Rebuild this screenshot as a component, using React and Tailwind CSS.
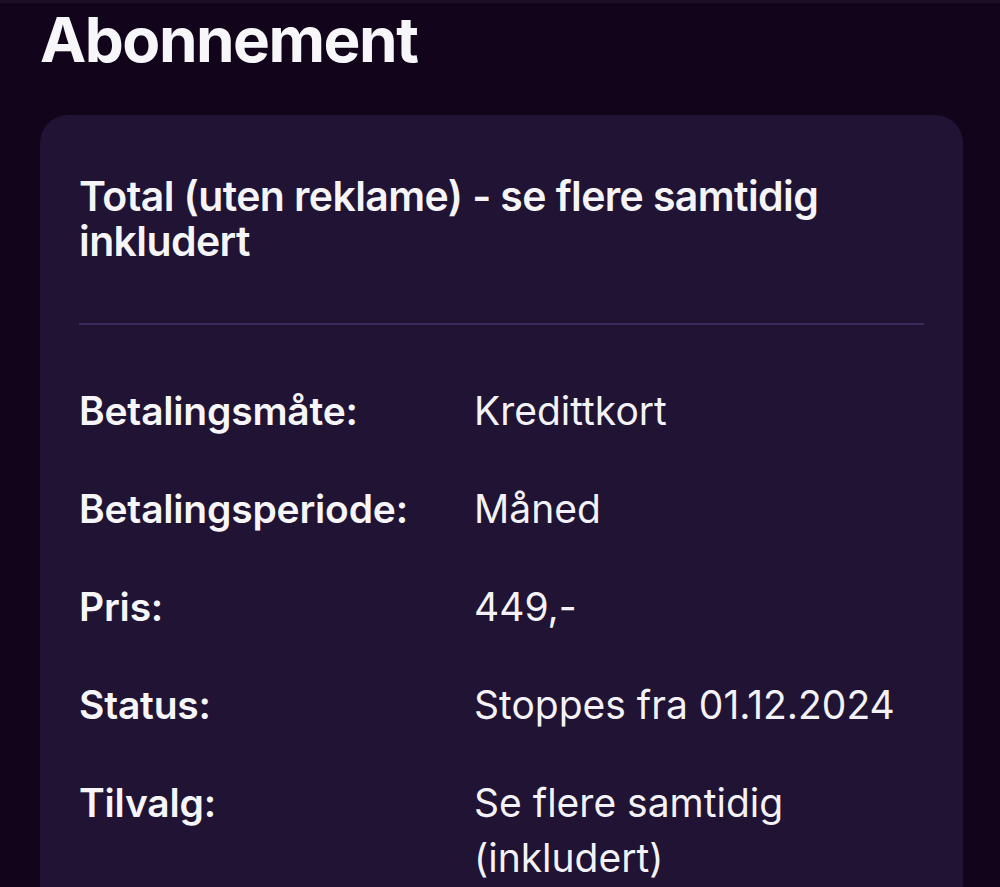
export default function App() {
  const rows = [
    ["Betalingsmåte:", "Kredittkort"],
    ["Betalingsperiode:", "Måned"],
    ["Pris:", "449,-"],
    ["Status:", "Stoppes fra 01.12.2024"],
    ["Tilvalg:", "Se flere samtidig (inkludert)"],
  ];
  return (
    <div className="w-[1000px] h-[887px] overflow-hidden bg-[#12041b] text-white" style={{ fontFamily: "Inter, 'Noto Sans', sans-serif" }}>
      <div className="h-[3px] bg-[#1c1027]" />
      <div className="px-10">
        <h1 className="text-[62px] leading-[70px] font-bold tracking-[-1.5px] text-[#f7f6f9] mt-[2px]">Abonnement</h1>
        <div className="mt-[40px] w-[923px] rounded-[28px] bg-[#201333] px-[39px] pt-[59px] pb-10">
          <h2 className="text-[41px] leading-[45px] font-semibold tracking-[-0.6px] text-[#f5f4f7] pr-4">
            Total (uten reklame) - se flere samtidig inkludert
          </h2>
          <div className="mt-[59px] h-[2px] bg-[#3b2b5c]" />
          <div className="mt-[58px] flex flex-col gap-[43px]">
            {rows.map(([k, v]) => (
              <div key={k} className="flex text-[39px] leading-[55px]">
                <div className="w-[395px] shrink-0 font-semibold tracking-[-0.2px] text-[#f6f5f8]">{k}</div>
                <div className="flex-1 min-w-0 font-normal text-[#f3f2f6]">{v}</div>
              </div>
            ))}
          </div>
        </div>
      </div>
    </div>
  );
}
